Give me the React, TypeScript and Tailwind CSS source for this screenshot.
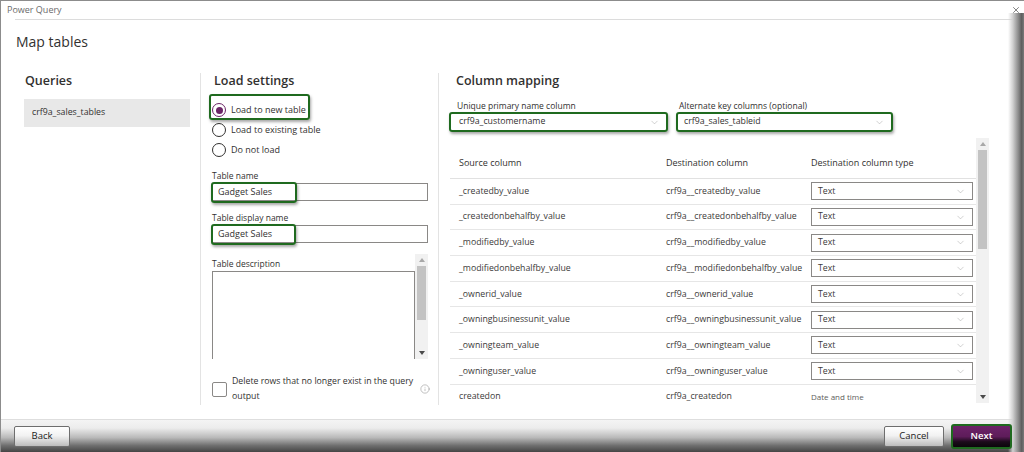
import React from 'react';
import { ChevronDown, Info, X } from 'lucide-react';

const rows: [string, string, string][] = [
  ['_createdby_value', 'crf9a__createdby_value', 'Text'],
  ['_createdonbehalfby_value', 'crf9a__createdonbehalfby_value', 'Text'],
  ['_modifiedby_value', 'crf9a__modifiedby_value', 'Text'],
  ['_modifiedonbehalfby_value', 'crf9a__modifiedonbehalfby_value', 'Text'],
  ['_ownerid_value', 'crf9a__ownerid_value', 'Text'],
  ['_owningbusinessunit_value', 'crf9a__owningbusinessunit_value', 'Text'],
  ['_owningteam_value', 'crf9a__owningteam_value', 'Text'],
  ['_owninguser_value', 'crf9a__owninguser_value', 'Text'],
  ['createdon', 'crf9a_createdon', 'Date and time'],
];

// green annotation box drawn over a control
function Mark({ className }: { className: string }) {
  return (
    <div
      className={`pointer-events-none absolute rounded-[3px] border-2 border-[#1f6a1f] shadow-[1px_2px_3px_rgba(0,0,0,0.35)] ${className}`}
    />
  );
}

function Radio({ label, checked }: { label: string; checked?: boolean }) {
  return (
    <div className="flex h-[20px] items-center gap-[5px]">
      <span
        className={`flex h-[14px] w-[14px] items-center justify-center rounded-full border ${
          checked ? 'border-[#6b2466]' : 'border-[#323130]'
        }`}
      >
        {checked && <span className="h-[7px] w-[7px] rounded-full bg-[#6b2466]" />}
      </span>
      <span className="text-[9px] leading-[12px]">{label}</span>
    </div>
  );
}

function Arrow({ down, dark }: { down?: boolean; dark?: boolean }) {
  return (
    <svg width="6" height="4" viewBox="0 0 6 4" className="shrink-0">
      <polygon points={down ? '0,0 6,0 3,4' : '0,4 6,4 3,0'} fill={dark ? '#4a4a4a' : '#a8a8a8'} />
    </svg>
  );
}

function Scrollbar({ thumbTop, thumbH }: { thumbTop: number; thumbH: number }) {
  return (
    <div className="flex w-[13px] flex-col items-center bg-[#f1f1f1] py-[4px]">
      <Arrow />
      <div className="w-[9px] bg-[#c3c3c3]" style={{ marginTop: thumbTop, height: thumbH }} />
      <div className="flex-1" />
      <Arrow down dark />
    </div>
  );
}

function Select({ value, className }: { value: string; className: string }) {
  return (
    <div
      className={`flex h-[18px] items-center justify-between border border-[#8a8886] bg-white pl-[6px] pr-[6px] text-[8.75px] ${className}`}
    >
      <span>{value}</span>
      <ChevronDown size={11} strokeWidth={1} className="text-[#9a9a9a]" />
    </div>
  );
}

export default function App() {
  return (
    <div className="relative flex h-[452px] w-[1024px] flex-col overflow-hidden border-l border-t border-[#8c8c8c] bg-white font-['Open_Sans',sans-serif] text-[#323130]">
      <div className="flex h-[18px] items-center justify-between pl-[6px] pr-[3px]">
        <span className="text-[9px] text-[#6b6b6b]">Power Query</span>
        <X size={10} strokeWidth={1.5} className="relative z-10 text-[#3a3a3a]" />
      </div>
      <div className="ml-[14px] h-px bg-[#dcdcdc]" />

      <h1 className="ml-[15px] mt-[11px] text-[14px] leading-[22px]">Map tables</h1>

      <div className="mt-[20px] flex h-[332px] pl-[15px]">
        {/* Queries */}
        <div className="w-[184px] pl-[8px] pr-[10px]">
          <div className="pl-[1px] text-[12.5px] font-semibold leading-[16px]">Queries</div>
          <div className="mt-[10px] flex h-[28px] items-center bg-[#e8e8e8] pl-[8px] text-[8.75px]">
            crf9a_sales_tables
          </div>
        </div>

        {/* Load settings */}
        <div className="w-[238px] border-l border-[#e3e3e3] pl-[11px]">
          <div className="pl-[2px] text-[12.5px] font-semibold leading-[16px]">Load settings</div>
          <div className="mt-[11px] flex flex-col">
            <div className="relative">
              <Radio label="Load to new table" checked />
              <Mark className="-left-[3px] -top-[6px] h-[26px] w-[101px]" />
            </div>
            <Radio label="Load to existing table" />
            <Radio label="Do not load" />
          </div>

          <div className="mt-[10px] text-[8.5px] leading-[12px]">Table name</div>
          <div className="relative mt-[1px] flex h-[18px] w-[216px] items-center border border-[#8a8886] pl-[5px] text-[9px]">
            Gadget Sales
            <Mark className="-left-[2px] -top-[2px] h-[21px] w-[86px]" />
          </div>

          <div className="mt-[11px] text-[8.5px] leading-[12px]">Table display name</div>
          <div className="relative mt-[1px] flex h-[18px] w-[216px] items-center border border-[#8a8886] pl-[5px] text-[9px]">
            Gadget Sales
            <Mark className="-left-[2px] -top-[2px] h-[21px] w-[85px]" />
          </div>

          <div className="mt-[11px] flex h-[105px] w-[216px]">
            <div className="flex flex-1 flex-col pt-[4px]">
              <div className="text-[8.5px] leading-[12px]">Table description</div>
              <div className="mt-[1px] flex-1 border-x border-t border-[#8a8886]" />
            </div>
            <Scrollbar thumbTop={4} thumbH={54} />
          </div>

          <div className="mt-[15px] flex w-[218px] items-center">
            <span className="h-[15px] w-[15px] shrink-0 rounded-[2px] border border-[#8a8886]" />
            <span className="ml-[5px] flex-1 text-[8.75px] leading-[15px]">
              Delete rows that no longer exist in the query output
            </span>
            <Info size={10} strokeWidth={1.25} className="ml-[2px] shrink-0 text-[#8a8a8a]" />
          </div>
        </div>

        {/* Column mapping */}
        <div className="w-[552px] border-l border-[#e3e3e3] pl-[11px]">
          <div className="pl-[6px] text-[12.5px] font-semibold leading-[16px]">Column mapping</div>
          <div className="mt-[11px] flex gap-[10px]">
            <div className="w-[217px]">
              <div className="pl-[7px] text-[8.5px] leading-[12px]">Unique primary name column</div>
              <div className="relative mt-[1px]">
                <Select value="crf9a_customername" className="w-[217px] pl-[8px]" />
                <Mark className="-inset-[1px]" />
              </div>
            </div>
            <div className="w-[215px]">
              <div className="pl-[2px] text-[8.5px] leading-[12px]">Alternate key columns (optional)</div>
              <div className="relative mt-[1px]">
                <Select value="crf9a_sales_tableid" className="w-[215px]" />
                <Mark className="-inset-[1px]" />
              </div>
            </div>
          </div>

          <div className="mt-[7px] flex h-[265px] w-[539px]">
            <div className="flex-1 overflow-hidden">
              <div className="flex h-[41px] items-end border-b border-[#e1e1e1] pb-[9px] text-[9px] leading-[12px]">
                <span className="w-[216px] pl-[9px]">Source column</span>
                <span className="w-[145px]">Destination column</span>
                <span>Destination column type</span>
              </div>
              {rows.map(([src, dst, type]) => (
                <div
                  key={src}
                  className="flex h-[25.7px] shrink-0 items-center border-b border-[#e6e6e6] text-[8.75px] text-[#3b3a39]"
                >
                  <span className="w-[216px] pl-[9px]">{src}</span>
                  <span className="w-[145px]">{dst}</span>
                  {type === 'Text' ? (
                    <Select value="Text" className="w-[162px]" />
                  ) : (
                    <span className="text-[8px] text-[#605e5c]">{type}</span>
                  )}
                </div>
              ))}
            </div>
            <Scrollbar thumbTop={4} thumbH={99} />
          </div>
        </div>
      </div>

      <div className="mt-auto flex h-[33px] items-center justify-between border-t border-[#dedede] bg-[linear-gradient(to_bottom,#f4f4f4_0%,#ececec_25%,#b9b9b9_55%,#6e6e6e_80%,#454545_100%)] pl-[13px] pr-[12px]">
        <button className="flex h-[21px] w-[56px] items-center justify-center rounded-[2px] border border-[#6e6e6e] bg-[linear-gradient(to_bottom,#ffffff_0%,#f2f2f2_45%,#bdbdbd_100%)] text-[9.5px] text-[#222]">
          Back
        </button>
        <div className="relative z-10 flex items-center gap-[7px]">
          <button className="flex h-[21px] w-[60px] items-center justify-center rounded-[2px] border border-[#6e6e6e] bg-[linear-gradient(to_bottom,#ffffff_0%,#f2f2f2_45%,#bdbdbd_100%)] text-[9.5px] text-[#222]">
            Cancel
          </button>
          <button className="flex h-[25px] w-[61px] items-center justify-center rounded-[3px] border-2 border-[#1f6a1f] bg-[linear-gradient(to_bottom,#6d2369_0%,#5e1c5a_50%,#1c0b1b_75%,#0b050b_100%)] text-[9.5px] font-semibold text-white">
            Next
          </button>
        </div>
      </div>

      {/* window shadow on the right edge */}
      <div className="pointer-events-none absolute bottom-0 right-0 top-[12px] w-[16px] bg-[linear-gradient(to_right,rgba(255,255,255,0)_0%,#d0d0d0_30%,#8a8a8a_65%,#5e5e5e_85%,#7a7a7a_100%)]" />
    </div>
  );
}
